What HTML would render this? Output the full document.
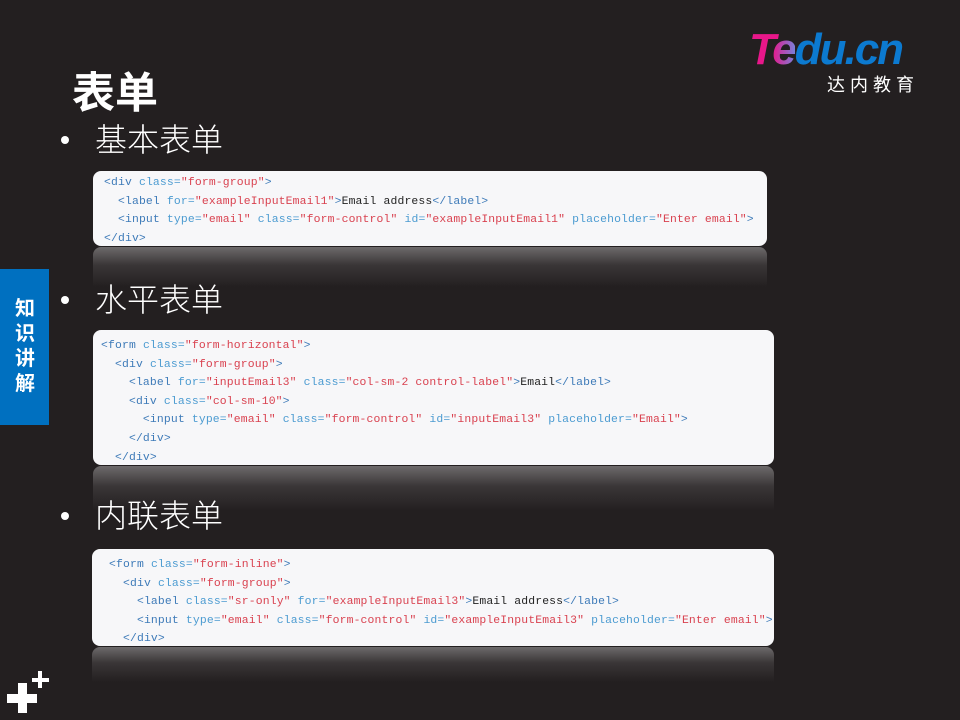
<!DOCTYPE html>
<html><head><meta charset="utf-8"><style>
*{margin:0;padding:0;box-sizing:border-box}
body{width:960px;height:720px;background:#231f20;position:relative;overflow:hidden;font-family:"Liberation Sans","Noto Sans CJK SC",sans-serif;color:#fff}
.abs{position:absolute}
.title{left:72px;top:68px;font-size:43px;font-weight:bold;line-height:52px}
.sub{left:95px;font-size:32px;line-height:40px;font-weight:300}
.dot{left:61px;width:8px;height:8px;border-radius:50%;background:#fff}
.box{background:#f7f7f9;border-radius:8px;font-family:"Liberation Mono",monospace;font-size:11.4px;letter-spacing:0.15px;color:#222;overflow:hidden}
.box div{height:18.6px;line-height:18.6px;white-space:pre}
.t{color:#3d7ab8}.a{color:#4b9bd1}.s{color:#d9414f}
.ref{background:linear-gradient(#6d6a6b,#3a3637 45%,#231f20);border-radius:8px 8px 0 0}
</style></head><body>
<div class="abs" style="left:749px;top:28px;font-size:44px;font-weight:bold;font-style:italic;letter-spacing:-2px;line-height:44px;color:#0c7ad0"><span style="color:#e8178a">T</span><span style="background:linear-gradient(90deg,#e8178a,#7b7fd8);-webkit-background-clip:text;color:transparent">e</span>du.cn</div>
<div class="abs" style="left:827px;top:74px;font-size:18px;letter-spacing:5px;line-height:22px">达内教育</div>
<div class="abs title">表单</div>
<div class="abs dot" style="top:136px"></div>
<div class="abs sub" style="top:120px">基本表单</div>
<div class="abs ref" style="left:93px;top:247px;width:674px;height:40px"></div>
<div class="abs box" style="left:93px;top:171px;width:674px;height:75px;padding:3px 0 0 11px">
<div><span class="t">&lt;div</span> <span class="a">class=</span><span class="s">"form-group"</span><span class="t">&gt;</span></div><div>  <span class="t">&lt;label</span> <span class="a">for=</span><span class="s">"exampleInputEmail1"</span><span class="t">&gt;</span>Email address<span class="t">&lt;/label&gt;</span></div><div>  <span class="t">&lt;input</span> <span class="a">type=</span><span class="s">"email"</span> <span class="a">class=</span><span class="s">"form-control"</span> <span class="a">id=</span><span class="s">"exampleInputEmail1"</span> <span class="a">placeholder=</span><span class="s">"Enter email"</span><span class="t">&gt;</span></div><div><span class="t">&lt;/div&gt;</span></div>
</div>
<div class="abs" style="left:0;top:269px;width:49px;height:156px;background:#0070c0"></div>
<div class="abs" style="left:13px;top:297px;width:24px;font-size:20px;font-weight:bold;line-height:25px;text-align:center">知<br>识<br>讲<br>解</div>
<div class="abs dot" style="top:296px"></div>
<div class="abs sub" style="top:280px">水平表单</div>
<div class="abs ref" style="left:93px;top:466px;width:681px;height:45px"></div>
<div class="abs box" style="left:93px;top:330px;width:681px;height:135px;padding:7px 0 0 8px">
<div><span class="t">&lt;form</span> <span class="a">class=</span><span class="s">"form-horizontal"</span><span class="t">&gt;</span></div><div>  <span class="t">&lt;div</span> <span class="a">class=</span><span class="s">"form-group"</span><span class="t">&gt;</span></div><div>    <span class="t">&lt;label</span> <span class="a">for=</span><span class="s">"inputEmail3"</span> <span class="a">class=</span><span class="s">"col-sm-2 control-label"</span><span class="t">&gt;</span>Email<span class="t">&lt;/label&gt;</span></div><div>    <span class="t">&lt;div</span> <span class="a">class=</span><span class="s">"col-sm-10"</span><span class="t">&gt;</span></div><div>      <span class="t">&lt;input</span> <span class="a">type=</span><span class="s">"email"</span> <span class="a">class=</span><span class="s">"form-control"</span> <span class="a">id=</span><span class="s">"inputEmail3"</span> <span class="a">placeholder=</span><span class="s">"Email"</span><span class="t">&gt;</span></div><div>    <span class="t">&lt;/div&gt;</span></div><div>  <span class="t">&lt;/div&gt;</span></div>
</div>
<div class="abs dot" style="top:512px"></div>
<div class="abs sub" style="top:496px">内联表单</div>
<div class="abs ref" style="left:92px;top:647px;width:682px;height:35px"></div>
<div class="abs box" style="left:92px;top:549px;width:682px;height:97px;padding:7px 0 0 17px">
<div><span class="t">&lt;form</span> <span class="a">class=</span><span class="s">"form-inline"</span><span class="t">&gt;</span></div><div>  <span class="t">&lt;div</span> <span class="a">class=</span><span class="s">"form-group"</span><span class="t">&gt;</span></div><div>    <span class="t">&lt;label</span> <span class="a">class=</span><span class="s">"sr-only"</span> <span class="a">for=</span><span class="s">"exampleInputEmail3"</span><span class="t">&gt;</span>Email address<span class="t">&lt;/label&gt;</span></div><div>    <span class="t">&lt;input</span> <span class="a">type=</span><span class="s">"email"</span> <span class="a">class=</span><span class="s">"form-control"</span> <span class="a">id=</span><span class="s">"exampleInputEmail3"</span> <span class="a">placeholder=</span><span class="s">"Enter email"</span><span class="t">&gt;</span></div><div>  <span class="t">&lt;/div&gt;</span></div>
</div>
<div class="abs" style="left:7px;top:694px;width:30px;height:9px;background:#fff"></div>
<div class="abs" style="left:18px;top:683px;width:9px;height:30px;background:#fff"></div>
<div class="abs" style="left:32px;top:678px;width:17px;height:4px;background:#fff"></div>
<div class="abs" style="left:38px;top:671px;width:4px;height:17px;background:#fff"></div>
</body></html>
